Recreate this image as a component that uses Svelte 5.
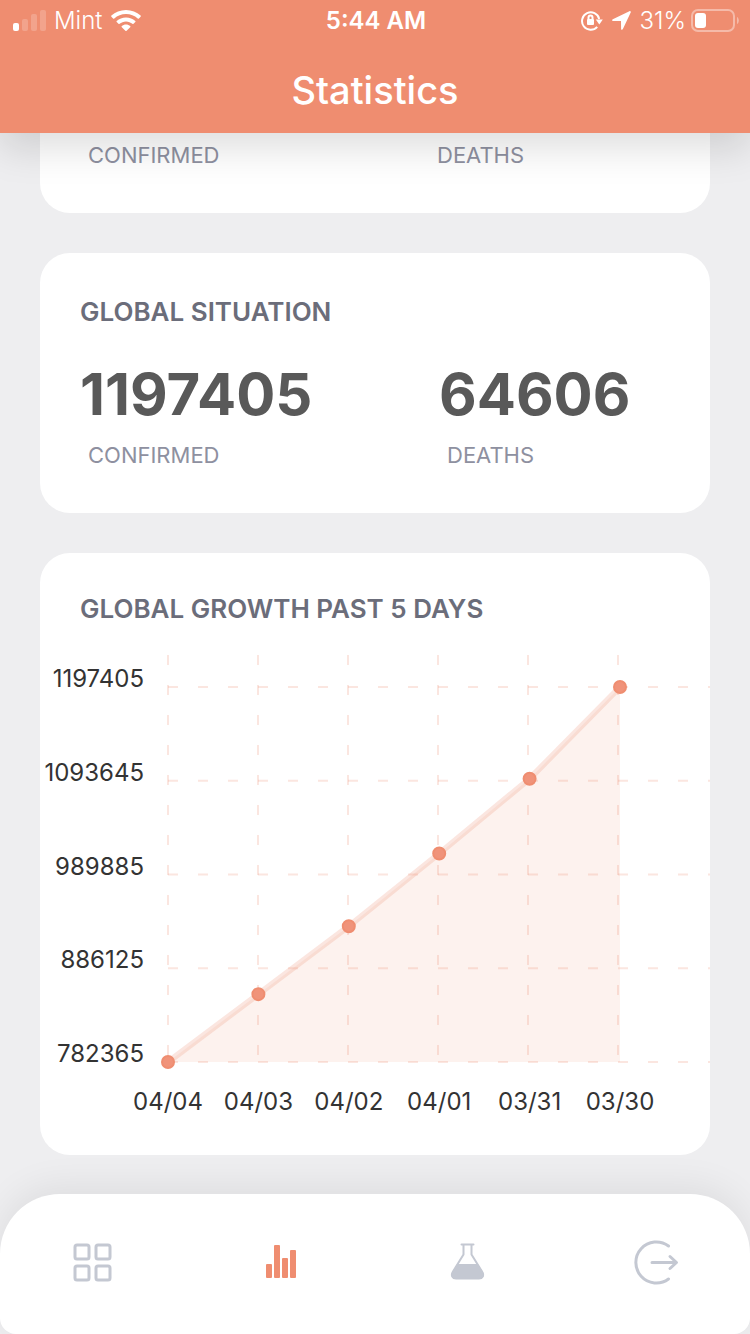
<script lang="ts">
  const growth = [
    { label: "04/04", total: 782365 },
    { label: "04/03", total: 857487 },
    { label: "04/02", total: 932605 },
    { label: "04/01", total: 1013157 },
    { label: "03/31", total: 1095917 },
    { label: "03/30", total: 1197405 },
  ];

  // plot area inside the 670 x 515 viewBox
  const left = 128;
  const right = 580;
  const top = 47;
  const bottom = 422;

  const min = growth[0].total;
  const max = growth[growth.length - 1].total;

  const points = growth.map((d, i) => ({
    label: d.label,
    x: left + ((right - left) * i) / (growth.length - 1),
    y: bottom - ((d.total - min) / (max - min)) * (bottom - top),
  }));
  const line = points.map((p) => `${p.x},${p.y}`).join(" ");
  const area = `${line} ${right},${bottom} ${left},${bottom}`;

  const rows = [0, 1, 2, 3, 4].map((i) => ({
    value: max - ((max - min) * i) / 4,
    y: top + ((bottom - top) * i) / 4,
  }));
  const cols = [0, 1, 2, 3, 4, 5].map((i) => left + 90 * i);
</script>

<div class="app">
  <header class="top">
    <div class="status">
      <div class="status-side">
        <svg class="signal" width="33" height="22" viewBox="0 0 33 22" aria-hidden="true">
          <rect x="0" y="14" width="6" height="8" rx="2" />
          <rect class="off" x="9" y="10" width="6" height="12" rx="2" />
          <rect class="off" x="18" y="5" width="6" height="17" rx="2" />
          <rect class="off" x="27" y="1" width="6" height="21" rx="2" />
        </svg>
        <span class="carrier">Mint</span>
        <svg width="30" height="22" viewBox="0 0 30 22" aria-hidden="true">
          <path d="M15 0C9.400 0 4.200 2.100.400 5.600c-.4.400-.4.800 0 1.200l1.700 1.700c.4.400.800.400 1.200 0C6.400 5.700 10.500 4 15 4s8.600 1.700 11.700 4.500c.4.400.8.400 1.200 0l1.700-1.700c.4-.4.4-.8 0-1.200C25.800 2.100 20.600 0 15 0z" />
          <path d="M15 7.400c-3.600 0-6.800 1.300-9.300 3.500-.4.400-.4.800 0 1.200l1.800 1.700c.3.300.8.300 1.100 0C10.300 12.300 12.500 11.400 15 11.400s4.700.9 6.400 2.400c.3.300.8.300 1.100 0l1.800-1.700c.4-.4.4-.8 0-1.200-2.500-2.200-5.700-3.500-9.300-3.500z" />
          <path d="M15 14.600c-1.600 0-3.100.600-4.200 1.500-.4.300-.4.700 0 1.100l3.600 3.500c.4.400.8.400 1.200 0l3.600-3.500c.4-.4.4-.8 0-1.100-1.100-.9-2.600-1.500-4.200-1.500z" />
        </svg>
      </div>
      <time class="clock">5:44 AM</time>
      <div class="status-side end">
        <svg width="22" height="20" viewBox="0 0 22 20" aria-hidden="true">
          <path class="ring" d="M16.200 15.900A8.700 8.700 0 1 1 18.200 8" />
          <path d="M14.800 8.500h7l-3.500 5z" />
          <rect x="6" y="8" width="7" height="6" rx="1" />
          <path class="shackle" d="M7.500 8.500V6.500a2 2 0 0 1 4 0v2" />
        </svg>
        <svg class="arrow" width="19" height="19" viewBox="0 0 19 19" aria-hidden="true">
          <path d="M17.400.200.800 8.200c-1.100.5-.9 1.700.2 1.700l8 .1.100 7.900c0 1.100 1.300 1.300 1.800.2L18.700 1.500c.4-.9-.3-1.700-1.300-1.300z" />
        </svg>
        <span class="charge">31%</span>
        <svg width="48" height="24" viewBox="0 0 48 24" aria-hidden="true">
          <rect class="case" x="1" y="1" width="42" height="21" rx="6" />
          <rect x="4" y="4" width="11" height="15" rx="3" />
          <path class="nub" d="M46 8c2.400 1 2.400 6 0 7z" />
        </svg>
      </div>
    </div>
    <h1 class="title">Statistics</h1>
  </header>

  <main class="content">
    <section class="card clipped">
      <div class="stats local">
        <span class="label">CONFIRMED</span>
        <span class="label">DEATHS</span>
      </div>
    </section>

    <section class="card">
      <h2 class="heading">GLOBAL SITUATION</h2>
      <div class="stats">
        <div class="stat">
          <strong class="number">1197405</strong>
          <span class="label">CONFIRMED</span>
        </div>
        <div class="stat">
          <strong class="number">64606</strong>
          <span class="label">DEATHS</span>
        </div>
      </div>
    </section>

    <section class="card growth">
      <h2 class="heading">GLOBAL GROWTH PAST 5 DAYS</h2>
      <svg class="chart" viewBox="0 0 670 515" role="img" aria-label="Global growth">
        {#each rows as row}
          <line class="grid" x1={left} x2="670" y1={row.y} y2={row.y} />
          <text class="tick" x="104" y={row.y} text-anchor="end">{row.value}</text>
        {/each}
        {#each cols as x}
          <line class="grid" x1={x} x2={x} y1="15" y2={bottom} />
        {/each}
        <polygon class="area" points={area} />
        <polyline class="line" points={line} />
        {#each points as p}
          <circle class="dot" cx={p.x} cy={p.y} r="6" />
          <text class="tick" x={p.x} y="470" text-anchor="middle">{p.label}</text>
        {/each}
      </svg>
    </section>
  </main>

  <nav class="tabs">
    <a class="tab" href="#home" aria-label="Home">
      <svg width="46" height="46" viewBox="0 0 46 46">
        <rect x="4" y="5" width="14" height="14" rx="2" />
        <rect x="25" y="5" width="14" height="14" rx="2" />
        <rect x="4" y="26" width="14" height="14" rx="2" />
        <rect x="25" y="26" width="14" height="14" rx="2" />
      </svg>
    </a>
    <a class="tab active" href="#statistics" aria-label="Statistics" aria-current="page">
      <svg width="46" height="46" viewBox="0 0 46 46">
        <rect x="8" y="24" width="6" height="14" rx="1" />
        <rect x="16" y="5" width="6" height="33" rx="1" />
        <rect x="24" y="18" width="6" height="20" rx="1" />
        <rect x="32" y="10" width="6" height="28" rx="1" />
      </svg>
    </a>
    <a class="tab" href="#testing" aria-label="Testing">
      <svg class="flask" width="46" height="46" viewBox="0 0 46 46">
        <path d="M15.500 4.500h12M17.500 4.500v10L7 31.500c-2.500 4-.5 7 3 7h23c3.500 0 5.500-3 3-7L25.500 14.500V4.500" />
        <path class="liquid" d="M11.500 24h20l5.500 8c2 4 0 6.500-3.500 6.500h-24c-3.500 0-5-3-3-6.500z" />
      </svg>
    </a>
    <a class="tab" href="#logout" aria-label="Log out">
      <svg class="exit" width="46" height="46" viewBox="0 0 46 46">
        <path d="M35.500 6A20.500 20.500 0 1 0 35.500 39" />
        <path d="M19 22.500h24M37 16.500l6.500 6-6.500 6" />
      </svg>
    </a>
  </nav>
</div>

<style>
  :global(body) { background: #eeeef0; }

  .app {
    display: flex;
    flex-direction: column;
    min-height: 100vh;
    font-family: Inter, "Liberation Sans", sans-serif;
    background: #eeeef0;
    overflow: hidden;
  }

  .top {
    position: relative;
    z-index: 1;
    color: #fff;
    background: #ef8d70;
    box-shadow: 0 16px 36px rgba(0, 0, 0, 0.13);
  }
  .status {
    display: grid;
    grid-template-columns: 1fr auto 1fr;
    align-items: center;
    height: 41px;
    padding: 0 11px 0 13px;
    font-size: 24px;
    line-height: 28px;
  }
  .status svg { fill: #fff; flex: none; }
  .status-side { display: flex; align-items: center; gap: 8px; }
  .status-side.end { justify-content: flex-end; gap: 5px; }
  .status-side .arrow { margin: 0 4px; }
  .status .signal { margin-bottom: 2px; }
  .signal .off { fill-opacity: 0.2; }
  .carrier { font-weight: 300; }
  .charge { font-weight: 300; }
  .clock { font-size: 24px; font-weight: 600; }
  .status .ring,
  .status .shackle,
  .status .case { fill: none; stroke: #fff; stroke-width: 2; }
  .status .case { stroke-opacity: 0.4; }
  .status .nub { fill-opacity: 0.4; }
  .title {
    margin: 0;
    padding: 25px 0 19px;
    font-size: 38px;
    line-height: 48px;
    font-weight: 500;
    text-align: center;
  }

  .content {
    flex: 1;
    display: flex;
    flex-direction: column;
    gap: 40px;
    padding: 0 40px 39px;
  }
  .card {
    padding: 44px 40px;
    border-radius: 30px;
    background: #fff;
  }
  .card.clipped {
    padding-top: 8px;
    border-radius: 0 0 30px 30px;
  }
  .card.growth { padding: 41px 0 0; }
  .growth .heading { margin: 0 40px 16px; }
  .heading {
    margin: 0 0 36px;
    font-size: 26px;
    line-height: 30px;
    font-weight: 600;
    color: #6b6d7a;
  }
  .stats { display: grid; grid-template-columns: 359fr 231fr; }
  .stats.local { grid-template-columns: 349fr 241fr; }
  .stat { display: flex; flex-direction: column; gap: 16px; }
  .number {
    font-size: 58px;
    line-height: 62px;
    font-weight: 700;
    color: #595959;
  }
  .label {
    padding-left: 8px;
    font-size: 22px;
    line-height: 28px;
    color: #8e90a0;
  }

  .chart { display: block; width: 100%; }
  .grid {
    stroke: #ef8d70;
    stroke-opacity: 0.22;
    stroke-width: 2;
    stroke-dasharray: 10 20;
  }
  .tick { font-size: 24px; fill: #333; }
  .area { fill: #ef8d60; fill-opacity: 0.11; }
  .line {
    fill: none;
    stroke: #ef8d70;
    stroke-opacity: 0.22;
    stroke-width: 6;
  }
  .dot { fill: #f0937a; stroke: #ef8d70; stroke-width: 2; }

  .tabs {
    position: relative;
    display: grid;
    grid-template-columns: repeat(4, 1fr);
    border-radius: 60px 60px 16px 16px;
    background: #fff;
    box-shadow: 0 -8px 36px rgba(0, 0, 0, 0.07);
  }
  .tab {
    display: flex;
    justify-content: center;
    padding: 46px 0 48px;
    color: #c4c8d2;
  }
  .tab.active { color: #ef8d70; }
  .tab svg {
    fill: none;
    stroke: currentColor;
    stroke-width: 3;
    stroke-linecap: round;
    stroke-linejoin: round;
  }
  .tab.active svg { fill: currentColor; stroke: none; }
  .tab .flask { stroke-width: 2; }
  .tab .liquid { fill: currentColor; stroke: none; }
  .tab .exit { overflow: visible; }
</style>
